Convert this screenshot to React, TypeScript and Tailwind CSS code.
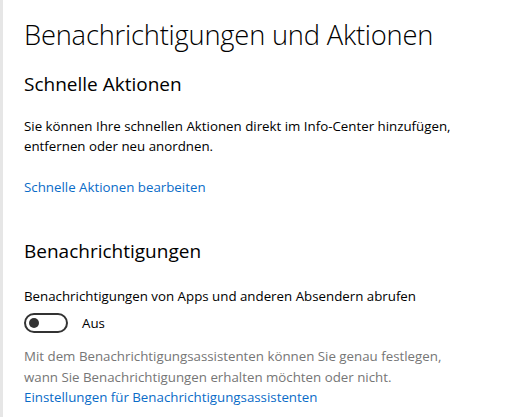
import React from "react";

export default function App() {
  const font = { fontFamily: '"Open Sans", "Noto Sans", sans-serif' };
  return (
    <div className="flex w-[507px] h-[417px] bg-white overflow-hidden" style={font}>
      <div className="w-[3px] shrink-0 bg-[#e6e6e6]" />
      <div className="flex flex-col pl-[21px] pt-[16px] text-black">
        <h1 className="text-[27.3px] font-light leading-[38px] tracking-[-0.2px]">Benachrichtigungen und Aktionen</h1>
        <h2 className="mt-[17px] text-[19px] leading-[26px]">Schnelle Aktionen</h2>
        <p className="mt-[19px] text-[13.3px] leading-[20px]">
          Sie können Ihre schnellen Aktionen direkt im Info-Center hinzufügen,
          <br />
          entfernen oder neu anordnen.
        </p>
        <a className="mt-[21px] text-[13.3px] leading-[20px] text-[#0a6cc8]">Schnelle Aktionen bearbeiten</a>
        <h2 className="mt-[41px] text-[19px] leading-[26px]">Benachrichtigungen</h2>
        <p className="mt-[22px] text-[13.3px] leading-[20px]">Benachrichtigungen von Apps und anderen Absendern abrufen</p>
        <div className="mt-[7px] flex items-center gap-[14px]">
          <div className="w-[44px] h-[20px] rounded-full border-2 border-[#333] flex items-center pl-[3px]">
            <div className="w-[10px] h-[10px] rounded-full bg-[#333]" />
          </div>
          <span className="text-[13.3px] leading-[20px]">Aus</span>
        </div>
        <p className="mt-[13px] text-[13.3px] leading-[20.5px] text-[#767676]">
          Mit dem Benachrichtigungsassistenten können Sie genau festlegen,
          <br />
          wann Sie Benachrichtigungen erhalten möchten oder nicht.
        </p>
        <a className="text-[13.3px] leading-[20px] text-[#0a6cc8]">Einstellungen für Benachrichtigungsassistenten</a>
      </div>
    </div>
  );
}
